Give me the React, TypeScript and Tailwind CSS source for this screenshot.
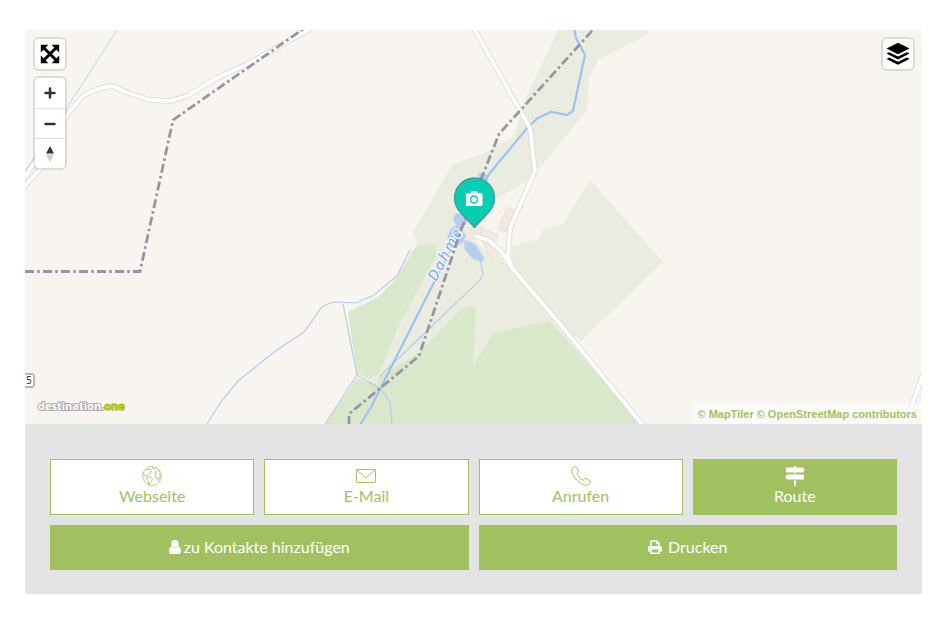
import { ComponentPropsWithoutRef, PropsWithChildren, ReactNode, SVGProps } from 'react'
import clsx from 'clsx'

const Globe = (props: SVGProps<SVGSVGElement>) => (
  <svg
    viewBox="0 0 20 20"
    fill="none"
    stroke="currentColor"
    strokeWidth="0.8"
    strokeLinejoin="round"
    aria-hidden="true"
    {...props}
  >
    <circle cx="10" cy="10" r="9.4" />
    <path d="M1.2 6.6 2.6 9.4 5 10.2 6.4 8.6 8.4 7.4 8 5.8 9.8 4.8 8.2 3.4 5.8 3.6 4.6 3" />
    <path d="M5 11 8 11 10.4 13 9.2 15.4 7.8 16.6 7.4 18.8M5 11 4.6 13 6.4 15 6.6 18.6" />
    <path d="M11 1.6 10.6 3 12.4 3.2 13.6 1.6M18 5.4 15.6 4.6 13.4 5.6 13 7.2 14.6 7.6 13 9 12.8 11 15.2 11.6 15.8 14.8 17.4 13 17.6 11 18.8 9.6 17.2 8.4 18.6 7.6" />
  </svg>
)

const Envelope = (props: SVGProps<SVGSVGElement>) => (
  <svg
    viewBox="0 0 20 20"
    fill="none"
    stroke="currentColor"
    aria-hidden="true"
    {...props}
  >
    <rect x="0.5" y="3.5" width="19" height="13" rx="0.6" />
    <path d="M1 4 10 12 19 4" />
  </svg>
)

const Phone = (props: SVGProps<SVGSVGElement>) => (
  <svg
    viewBox="0 0 20 20"
    fill="none"
    stroke="currentColor"
    strokeLinejoin="round"
    aria-hidden="true"
    {...props}
  >
    <path d="M3.2 1 4.6.6 7.6 5 7.4 6.2 5.8 7.6C6 9.8 9.8 13.8 12.2 14.2L13.8 12.6 15 12.4 19.4 15.4 19.2 16.8C17.6 19 15.2 19.8 12.6 18.8 7.4 16.6 3 12 1 7.2.2 4.6 1 2.4 3.2 1Z" />
  </svg>
)

const Signpost = (props: SVGProps<SVGSVGElement>) => (
  <svg viewBox="0 0 20 20" fill="currentColor" aria-hidden="true" {...props}>
    <path d="M9 0h2v1.4h7L19.8 4 18 6.6H2c-.6 0-1-.4-1-1V2.4c0-.6.4-1 1-1h7ZM9 7.4h2v1h7c.6 0 1 .4 1 1v3.2c0 .6-.4 1-1 1H2L.2 11 2 8.4h7ZM9 14.4h2V20H9Z" />
  </svg>
)

const Person = (props: SVGProps<SVGSVGElement>) => (
  <svg viewBox="0 0 12 14" fill="currentColor" aria-hidden="true" {...props}>
    <circle cx="6" cy="3.8" r="3.8" />
    <path d="M2.6 6.2C.8 6.8 0 8.8 0 11.2 0 12.8 1 14 2.4 14h7.2c1.4 0 2.4-1.2 2.4-2.8 0-2.4-.8-4.4-2.6-5C8.4 7.4 7.2 8 6 8S3.6 7.4 2.6 6.2Z" />
  </svg>
)

const Printer = (props: SVGProps<SVGSVGElement>) => (
  <svg viewBox="0 0 14 14" fill="none" stroke="currentColor" aria-hidden="true" {...props}>
    <path d="M3 7V1h6l2.2 2.2V7M8.6 1v2.6H11" strokeWidth="1.4" />
    <path
      d="M1.6 6h10.8c.9 0 1.6.7 1.6 1.6V11.4h-2.4V9.4H2.4v2H0V7.6C0 6.7.7 6 1.6 6Z"
      fill="currentColor"
      stroke="none"
    />
    <path d="M3 9.4v3.8h8.2V9.4" strokeWidth="1.4" />
  </svg>
)

const Expand = () => (
  <svg viewBox="0 0 20 20" className="size-5" aria-hidden="true">
    <path d="M4 4 16 16M16 4 4 16" stroke="#000" strokeWidth="3" />
    <path d="M.8.8h7.6L.8 8.4ZM19.2.8v7.6L11.6.8ZM.8 19.2v-7.6l7.6 7.6ZM19.2 19.2h-7.6l7.6-7.6Z" />
  </svg>
)

const Layers = () => (
  <svg viewBox="0 0 24 24" className="size-6" aria-hidden="true">
    <path d="M12 .8 23.5 6.6 12 12.2.5 6.6ZM3.2 10.2 12 14.4l8.8-4.2 2.7 1.4L12 17.4.5 11.6ZM3.2 15.6 12 19.8l8.8-4.2 2.7 1.4L12 22.8.5 17Z" />
  </svg>
)

const MapButton = ({ className, ...props }: ComponentPropsWithoutRef<'button'>) => (
  <button
    type="button"
    className={clsx('flex h-[30px] w-[30px] items-center justify-center', className)}
    {...props}
  />
)

const ControlGroup = ({ children }: PropsWithChildren) => (
  <div className="overflow-hidden rounded bg-white shadow-[0_0_0_2px_rgba(0,0,0,0.1)]">
    {children}
  </div>
)

const boundary = 'M25 271.5H140L173 120 309 25M349 425V414L419 356 461 230 499 134 600 22'

const roads = [
  'M20 184 70 111 84 95 98 89 112 86 128 93 150 100 170 101 187 96 217 78 250 63 315 26',
  'M20 191 45 164',
  'M472 25 530 128 535 171 510 228 508 256 512 268',
  'M476 236 488 240 501 251 512 268 560 324 645 428',
  'M905 424 923 375'
]

const MapCanvas = () => (
  <svg
    viewBox="25 30 897 394"
    preserveAspectRatio="xMidYMid slice"
    className="block h-[394px] w-full bg-[#f8f4f0]"
    role="img"
    aria-label="Karte"
  >
    <g fill="#eaecdf">
      <path d="M558 30 524 102 514 136 484 153 452 165 413 232 417 244 382 322 350 424H645L512 268 507 246 500 208 498 198 527 181 540 168 587 110 589 77 599 59 620 49 648 34V30Z" />
      <path d="M512 246 539 239 543 229 564 223 590 180 663 262 581 341 560 324 512 268Z" />
    </g>
    <path fill="#f8f4f0" d="M495 200 527 181 533 175 512 225 507 247 511 264 499 264 480 246 470 231Z" />
    <g fill="#d9e8ca">
      <path d="M348 312 378 297 396 279 412 252 418 245 433 244 438 252 400 323 379 373 369 379 357 374Z" />
      <path d="M357 378 378 384 370 424H325Z" />
      <path d="M369 424 379 377 420 352 462 308 476 306 473 365 494 333 550 321 641 424Z" />
    </g>
    <path fill="#f8f4f0" d="m359 374 10 6-2 2-9-4Z" />
    <g fill="#f2e9e1" stroke="#ebe0d8" strokeWidth="1">
      <path d="m507 207 8 4-8 21-9-3ZM482 228l16 7-2 6-16-6ZM471 228l12-2-3 10-10-2ZM483 242l9 4 12 17-3 1-12-9Z" />
    </g>
    <g fill="#b4cff0">
      <path d="m479 173 8 1 1 7-6 3-5-4ZM456 213l9 1 2 8-5 8 4 5-3 8-10 4-6-9 3-8 6-5-3-6ZM464 240l7 2 5 3 8 13-1 4-10-3-8-9Z" />
    </g>
    <g fill="none" stroke="#b3cdec">
      <path d="M118 29 66 109 63 116 20 178" stroke="#bdd4ee" strokeWidth="1" />
      <path d="M207 424 220 403 238 381 274 352 304 332 322 307C328 303 332 302 338 302L356 303 374 295 397 276 410 250M343 304 357 375 325 424M357 375 374 385C384 392 388 397 390 403L392 424M480 260 483 274 480 280 428 330 380 376M26 178 45 153" strokeWidth="1.2" />
      <path d="M574 28 576 38 585 55 573 111 567 115 551 112 538 118 528 127 489 174 458 235 371 407 360 425" stroke="#9bc2f4" strokeWidth="2.2" />
    </g>
    <g fill="none" strokeLinejoin="round">
      {roads.map(d => (
        <path key={d} d={d} stroke="#dad8d6" strokeWidth="5.5" />
      ))}
      {roads.map(d => (
        <path key={d} d={d} stroke="#fff" strokeWidth="3.9" />
      ))}
    </g>
    <text
      transform="translate(436 282) rotate(-62)"
      fontFamily="Noto Sans, sans-serif"
      fontSize="15"
      fontStyle="italic"
      letterSpacing="2"
      fill="#78acef"
      stroke="#f3f5f7"
      strokeWidth="3"
      paintOrder="stroke"
    >
      Dahme
    </text>
    <path
      d={boundary}
      fill="none"
      stroke="#9995a5"
      strokeWidth="2.8"
      strokeDasharray="9 3.2 2.6 3.2"
    />
    <rect x="10.5" y="374" width="23.5" height="13" rx="1.5" fill="#fff" stroke="#777" />
    <text x="26" y="384" fontFamily="Noto Sans, sans-serif" fontSize="10" fill="#333">
      5
    </text>
    <g>
      <path
        d="M474.5 227.5 461 213C456 208 454.5 203 454.5 198A20 20 0 0 1 494.5 198C494.5 203 493 208 488 213Z"
        fill="#06cdb3"
        stroke="#439b91"
        strokeWidth="1.3"
      />
      <path
        d="M467.5 193h3l1.3-2h4.8l1.3 2h3c1 0 1.6.6 1.6 1.6v9.8c0 1-.6 1.6-1.6 1.6h-13.4c-1 0-1.6-.6-1.6-1.6v-9.8c0-1 .6-1.6 1.6-1.6Z"
        fill="#fff"
      />
      <circle cx="474" cy="199.5" r="3.5" fill="#fff" stroke="#06cdb3" strokeWidth="1.5" />
    </g>
  </svg>
)

const TourMap = () => (
  <div className="relative overflow-hidden">
    <MapCanvas />
    <div className="absolute top-[7px] left-2 flex flex-col gap-[9px] p-0.5">
      <ControlGroup>
        <MapButton aria-label="Vollbild">
          <Expand />
        </MapButton>
      </ControlGroup>
      <ControlGroup>
        <MapButton aria-label="Vergrößern">
          <svg viewBox="0 0 12 12" className="size-3" aria-hidden="true">
            <path d="M6 1.5v9M1.5 6h9" stroke="#333" strokeWidth="2.5" strokeLinecap="round" />
          </svg>
        </MapButton>
        <MapButton aria-label="Verkleinern" className="border-t border-[#ddd]">
          <svg viewBox="0 0 12 12" className="size-3" aria-hidden="true">
            <path d="M1.5 6h9" stroke="#333" strokeWidth="2.5" strokeLinecap="round" />
          </svg>
        </MapButton>
        <MapButton aria-label="Nach Norden ausrichten" className="border-t border-[#ddd]">
          <svg viewBox="0 0 10 18" className="h-[18px] w-2.5" aria-hidden="true">
            <path d="m5 1 4 7.5H1Z" fill="#333" />
            <path d="m5 17 4-7.5H1Z" fill="#ccc" />
          </svg>
        </MapButton>
      </ControlGroup>
    </div>
    <div className="absolute top-[7px] right-[7px] p-0.5">
      <ControlGroup>
        <MapButton aria-label="Ebenen">
          <Layers />
        </MapButton>
      </ControlGroup>
    </div>
    <a
      href="#destination"
      className="absolute bottom-2 left-[13px] font-['Open_Sans',sans-serif] text-[11px] leading-5 font-bold text-white [paint-order:stroke] [-webkit-text-stroke:2px_#aaa]"
    >
      destination.<span className="text-[#bdd400] [-webkit-text-stroke:1px_#93a31a]">one</span>
    </a>
    <div className="absolute right-0 bottom-0 flex gap-[3px] bg-white/50 px-[5px] font-['Liberation_Sans',sans-serif] text-[11px] leading-5 font-bold text-[#a1c161]">
      <a href="#maptiler">© MapTiler</a>
      <a href="#openstreetmap">© OpenStreetMap contributors</a>
    </div>
  </div>
)

type ActionProps = { icon: ReactNode; label: string; filled?: boolean }

const Action = ({ icon, label, filled }: ActionProps) => (
  <a
    href={`#${label.toLowerCase()}`}
    className={clsx(
      'flex h-14 flex-col items-center border border-[#a1c161] pt-1.5 leading-5',
      filled ? 'bg-[#a1c161] text-white' : 'bg-white text-[#a1c161]'
    )}
  >
    {icon}
    {label}
  </a>
)

const WideAction = ({ children }: PropsWithChildren) => (
  <button
    type="button"
    className="flex h-[45px] items-center justify-center bg-[#a1c161] pb-0.5 text-white"
  >
    {children}
  </button>
)

export default function App() {
  return (
    <main className="min-h-screen bg-white pt-[30px] pr-7 pb-[30px] pl-[25px] font-[Lato,sans-serif] text-base">
      <TourMap />
      <div className="flex flex-col gap-2.5 bg-[#e4e4e4] px-[25px] pt-[35px] pb-6">
        <div className="grid grid-cols-4 gap-2.5">
          <Action icon={<Globe className="size-5" />} label="Webseite" />
          <Action icon={<Envelope className="size-5" />} label="E-Mail" />
          <Action icon={<Phone className="size-5" />} label="Anrufen" />
          <Action icon={<Signpost className="size-5" />} label="Route" filled />
        </div>
        <div className="grid grid-cols-2 gap-2.5">
          <WideAction>
            <Person className="mr-[3px] h-3.5 w-3" />
            zu Kontakte hinzufügen
          </WideAction>
          <WideAction>
            <Printer className="mr-1.5 size-3.5" />
            Drucken
          </WideAction>
        </div>
      </div>
    </main>
  )
}
